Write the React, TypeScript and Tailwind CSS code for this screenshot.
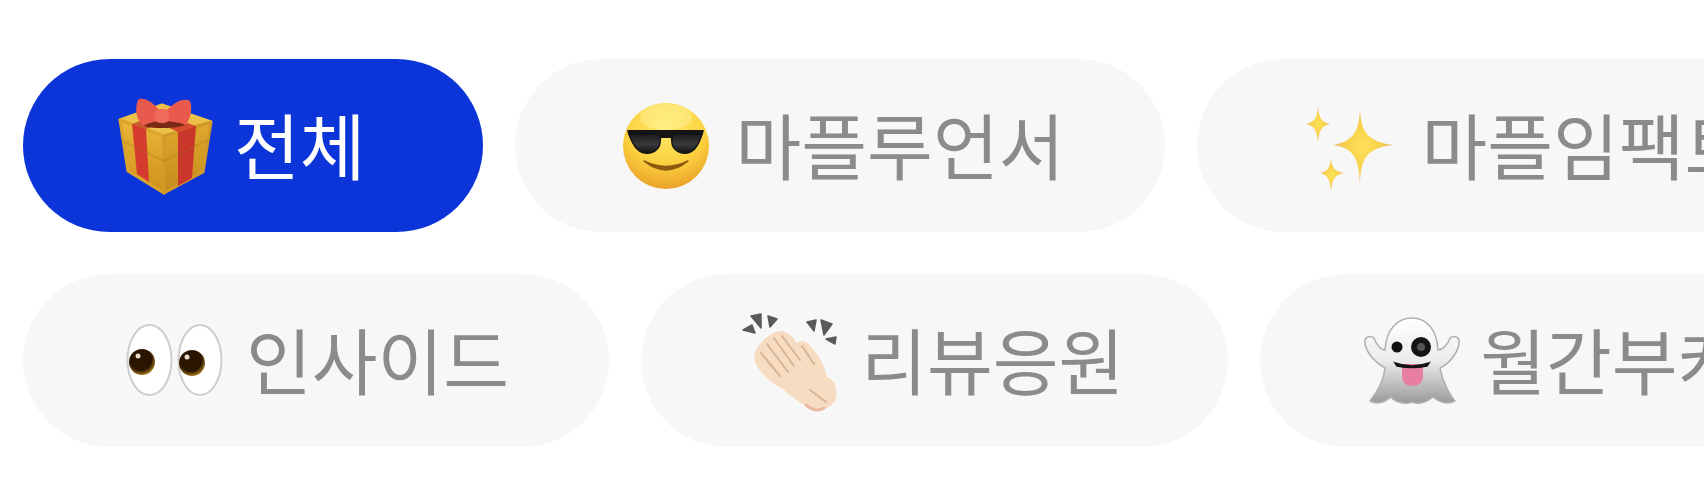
import type { ReactNode } from "react";

const Svg = ({ box = "0 0 110 110", children }: { box?: string; children: ReactNode }) => (
  <svg className="w-[110px] h-[110px] shrink-0" viewBox={box} aria-hidden="true">
    {children}
  </svg>
);

const GiftIcon = () => (
  <Svg>
    <defs>
      <linearGradient id="giftLeft" x1="0" y1="0" x2="0" y2="1">
        <stop offset="0" stopColor="#eab738" />
        <stop offset="1" stopColor="#d0901c" />
      </linearGradient>
      <linearGradient id="giftRight" x1="0" y1="0" x2="0" y2="1">
        <stop offset="0" stopColor="#e0a92f" />
        <stop offset="1" stopColor="#c58a1c" />
      </linearGradient>
    </defs>
    <g strokeWidth="3" strokeLinejoin="round">
      <polygon points="10,29 52,14 101,31 54,45" fill="#edc04a" stroke="#edc04a" />
      <polygon points="10,29 54,45 54,102 18,80" fill="url(#giftLeft)" stroke="#dca42c" />
      <polygon points="54,45 101,31 93,81 54,102" fill="url(#giftRight)" stroke="#d09a28" />
    </g>
    <polygon points="22,33 36,38 39,91 27,83" fill="#d63c2e" />
    <polygon points="68,41 86,35 82,87 68,95" fill="#c9372b" />
    <polygon points="22,33 36,38 72,25 58,20" fill="#c9572f" />
    <polygon points="68,41 86,35 52,23 38,27" fill="#d64a30" />
    <path d="M13 50 L54 70 L98 49" fill="none" stroke="#a8701a" strokeOpacity="0.25" strokeWidth="2" />
    <path d="M34 35 C40 28 48 28 52 31 C60 28 68 30 76 34 C66 37 58 37 52 37 C46 37 40 37 34 35Z" fill="#7a2a14" />
    <path d="M53 24 C44 10 32 5 28 9 C24 18 27 30 33 35 C40 31 47 30 53 30Z" fill="#e85a4c" />
    <path d="M53 24 C62 12 73 6 80 10 C83 19 80 28 76 34 C68 31 60 30 53 30Z" fill="#e85a4c" />
    <rect x="45" y="18" width="14" height="14" rx="5" fill="#ee6a5a" />
  </Svg>
);

const SunglassesIcon = () => (
  <Svg>
    <defs>
      <radialGradient id="faceFill" cx="0.5" cy="0.25" r="0.8">
        <stop offset="0" stopColor="#ffec6a" />
        <stop offset="0.6" stopColor="#fbcf3e" />
        <stop offset="1" stopColor="#e79a24" />
      </radialGradient>
      <linearGradient id="lensFill" x1="0" y1="0" x2="0" y2="1">
        <stop offset="0" stopColor="#111111" />
        <stop offset="0.6" stopColor="#3a3a3c" />
        <stop offset="1" stopColor="#111111" />
      </linearGradient>
    </defs>
    <circle cx="55" cy="55" r="43" fill="url(#faceFill)" />
    <ellipse cx="55" cy="26" rx="26" ry="13" fill="#fff6a8" fillOpacity="0.4" />
    <path d="M17 40 H50 L49 52 C48 60 40 63 34 62 C25 61 20 50 17 40Z" fill="url(#lensFill)" stroke="#141414" strokeWidth="1.5" />
    <path d="M92 40 H60 L61 52 C62 60 70 63 76 62 C85 61 89 50 92 40Z" fill="url(#lensFill)" stroke="#141414" strokeWidth="1.5" />
    <rect x="17" y="39" width="75" height="5" fill="#141414" />
    <rect x="48" y="40" width="14" height="7" fill="#141414" />
    <path d="M33 70 Q55 88 77 70 Q55 81 33 70Z" fill="#8d5a12" stroke="#8d5a12" strokeWidth="1.5" strokeLinejoin="round" />
  </Svg>
);

const SparklesIcon = () => (
  <Svg box="0 -5 110 110">
    <defs>
      <radialGradient id="sparkFill" cx="0.5" cy="0.5" r="0.55">
        <stop offset="0" stopColor="#ffe25a" />
        <stop offset="0.55" stopColor="#f6cf4a" />
        <stop offset="1" stopColor="#f0b080" />
      </radialGradient>
    </defs>
    <path d="M62 12 C63 34 67 45 95 49 C67 52 63 64 62 88 C61 64 57 52 35 49 C57 45 61 34 62 12Z" fill="url(#sparkFill)" />
    <path d="M20 10 C21 22 23 26 32 28 C23 30 21 35 20 47 C19 35 17 30 8 28 C17 26 19 22 20 10Z" fill="url(#sparkFill)" />
    <path d="M33 62 C34 72 36 75 46 77 C36 79 34 84 33 95 C32 84 30 79 22 77 C30 75 32 72 33 62Z" fill="url(#sparkFill)" />
  </Svg>
);

const EyesIcon = () => (
  <Svg>
    <defs>
      <radialGradient id="pupilFill" cx="0.45" cy="0.4" r="0.6">
        <stop offset="0" stopColor="#2a1500" />
        <stop offset="0.7" stopColor="#2a1500" />
        <stop offset="1" stopColor="#a67a1e" />
      </radialGradient>
    </defs>
    <ellipse cx="30.5" cy="54" rx="22" ry="35" fill="#fff" stroke="#cdcdcd" strokeWidth="2" />
    <ellipse cx="81" cy="54" rx="21.5" ry="35" fill="#fff" stroke="#cdcdcd" strokeWidth="2" />
    <circle cx="23" cy="56" r="13" fill="url(#pupilFill)" />
    <circle cx="73" cy="57" r="13" fill="url(#pupilFill)" />
    <circle cx="19" cy="50" r="2.5" fill="#e9dccb" />
    <circle cx="68" cy="51" r="2.5" fill="#e9dccb" />
  </Svg>
);

const ClapIcon = () => (
  <Svg>
    <g fill="#5a5a5a" stroke="#5a5a5a" strokeWidth="1.5" strokeLinejoin="round">
      <polygon points="9,24 18,19 21,27" />
      <polygon points="17,10 27,8 27,22" />
      <polygon points="34,10 43,13 36,21" />
      <polygon points="73,16 82,14 80,25" />
      <polygon points="87,14 98,18 90,29" />
      <polygon points="92,33 102,31 101,38" />
    </g>
    <path
      d="M22 44 C28 33 39 25 48 25 C56 27 60 33 63 37 C68 33 73 35 77 41 C85 49 91 61 93 71 C99 73 104 80 102 92 C99 101 88 106 80 104 C73 101 59 93 49 83 C37 77 25 67 21 56 C20 52 20 48 22 44Z"
      fill="#f6dcc0"
    />
    <g fill="none" stroke="#d9b595" strokeWidth="2" strokeLinecap="round">
      <path d="M48 30 L66 54" />
      <path d="M40 32 L60 60" />
      <path d="M33 38 L54 66" />
      <path d="M27 47 L46 70" />
      <path d="M68 40 L80 58" />
      <path d="M76 84 L92 96" />
    </g>
    <path d="M72 99 C78 104 84 106 90 102" fill="none" stroke="#e9b9a0" strokeWidth="3" strokeLinecap="round" />
  </Svg>
);

const GhostIcon = () => (
  <Svg>
    <defs>
      <linearGradient id="ghostFill" x1="0" y1="0" x2="0" y2="1">
        <stop offset="0" stopColor="#ffffff" />
        <stop offset="0.5" stopColor="#ececec" />
        <stop offset="1" stopColor="#9a9a9a" />
      </linearGradient>
    </defs>
    <path
      d="M57 12 C72 12 82 24 83 44 C88 44 93 38 95 32 C100 29 105 31 104 38 C102 48 94 58 85 62 C87 74 94 88 100 95 C92 99 84 96 78 91 C72 96 64 99 57 96 C50 99 40 96 36 91 C30 96 22 99 15 95 C22 86 29 74 30 62 C22 58 12 48 10 38 C9 31 14 29 19 32 C21 38 26 44 30 44 C31 24 42 12 57 12Z"
      fill="url(#ghostFill)"
      stroke="#b0b0b0"
      strokeWidth="1.5"
      strokeLinejoin="round"
    />
    <circle cx="42" cy="41" r="5.5" fill="#111" />
    <circle cx="66" cy="41" r="10" fill="#151515" />
    <circle cx="66" cy="41" r="4" fill="#555" />
    <path d="M47 58 H68 V70 C68 77 63 80 57.5 80 C52 80 47 77 47 70Z" fill="#e97ea4" />
    <path d="M40 57 Q57 63 74 57 L72 60 Q57 63 42 60Z" fill="#151515" stroke="#151515" strokeWidth="1.5" />
  </Svg>
);

const rowOne = [
  { label: "전체", icon: <GiftIcon />, space: "pl-[87px] pr-[117px] gap-[14px]", active: true },
  { label: "마플루언서", icon: <SunglassesIcon />, space: "pl-[96px] pr-[101px] gap-[15px]", active: false },
  { label: "마플임팩트", icon: <SparklesIcon />, space: "pl-[101px] pr-[105px] gap-[13px]", active: false },
];

const rowTwo = [
  { label: "인사이드", icon: <EyesIcon />, space: "pl-[96px] pr-[100px] gap-[17px]", active: false },
  { label: "리뷰응원", icon: <ClapIcon />, space: "pl-[93px] pr-[104px] gap-[17px]", active: false },
  { label: "월간부캐", icon: <GhostIcon />, space: "pl-[95px] pr-[105px] gap-[15px]", active: false },
];

const Row = ({ items }: { items: typeof rowOne }) => (
  <div className="flex gap-[32px] pl-[23px]">
    {items.map((item) => (
      <button
        key={item.label}
        className={`flex h-[173px] shrink-0 items-center rounded-full ${item.space} ${
          item.active ? "bg-[#0c35d9] text-white" : "bg-[#f7f7f7] text-[#8b8b8b]"
        }`}
      >
        {item.icon}
        <span className="whitespace-nowrap pb-[3px] text-[71.5px] leading-none">{item.label}</span>
      </button>
    ))}
  </div>
);

export default function App() {
  return (
    <div className="flex h-[496px] w-[1704px] flex-col gap-[42px] overflow-hidden bg-white pt-[59px] font-['Noto_Sans_CJK_KR',sans-serif] blur-[0.6px]">
      <Row items={rowOne} />
      <Row items={rowTwo} />
    </div>
  );
}
